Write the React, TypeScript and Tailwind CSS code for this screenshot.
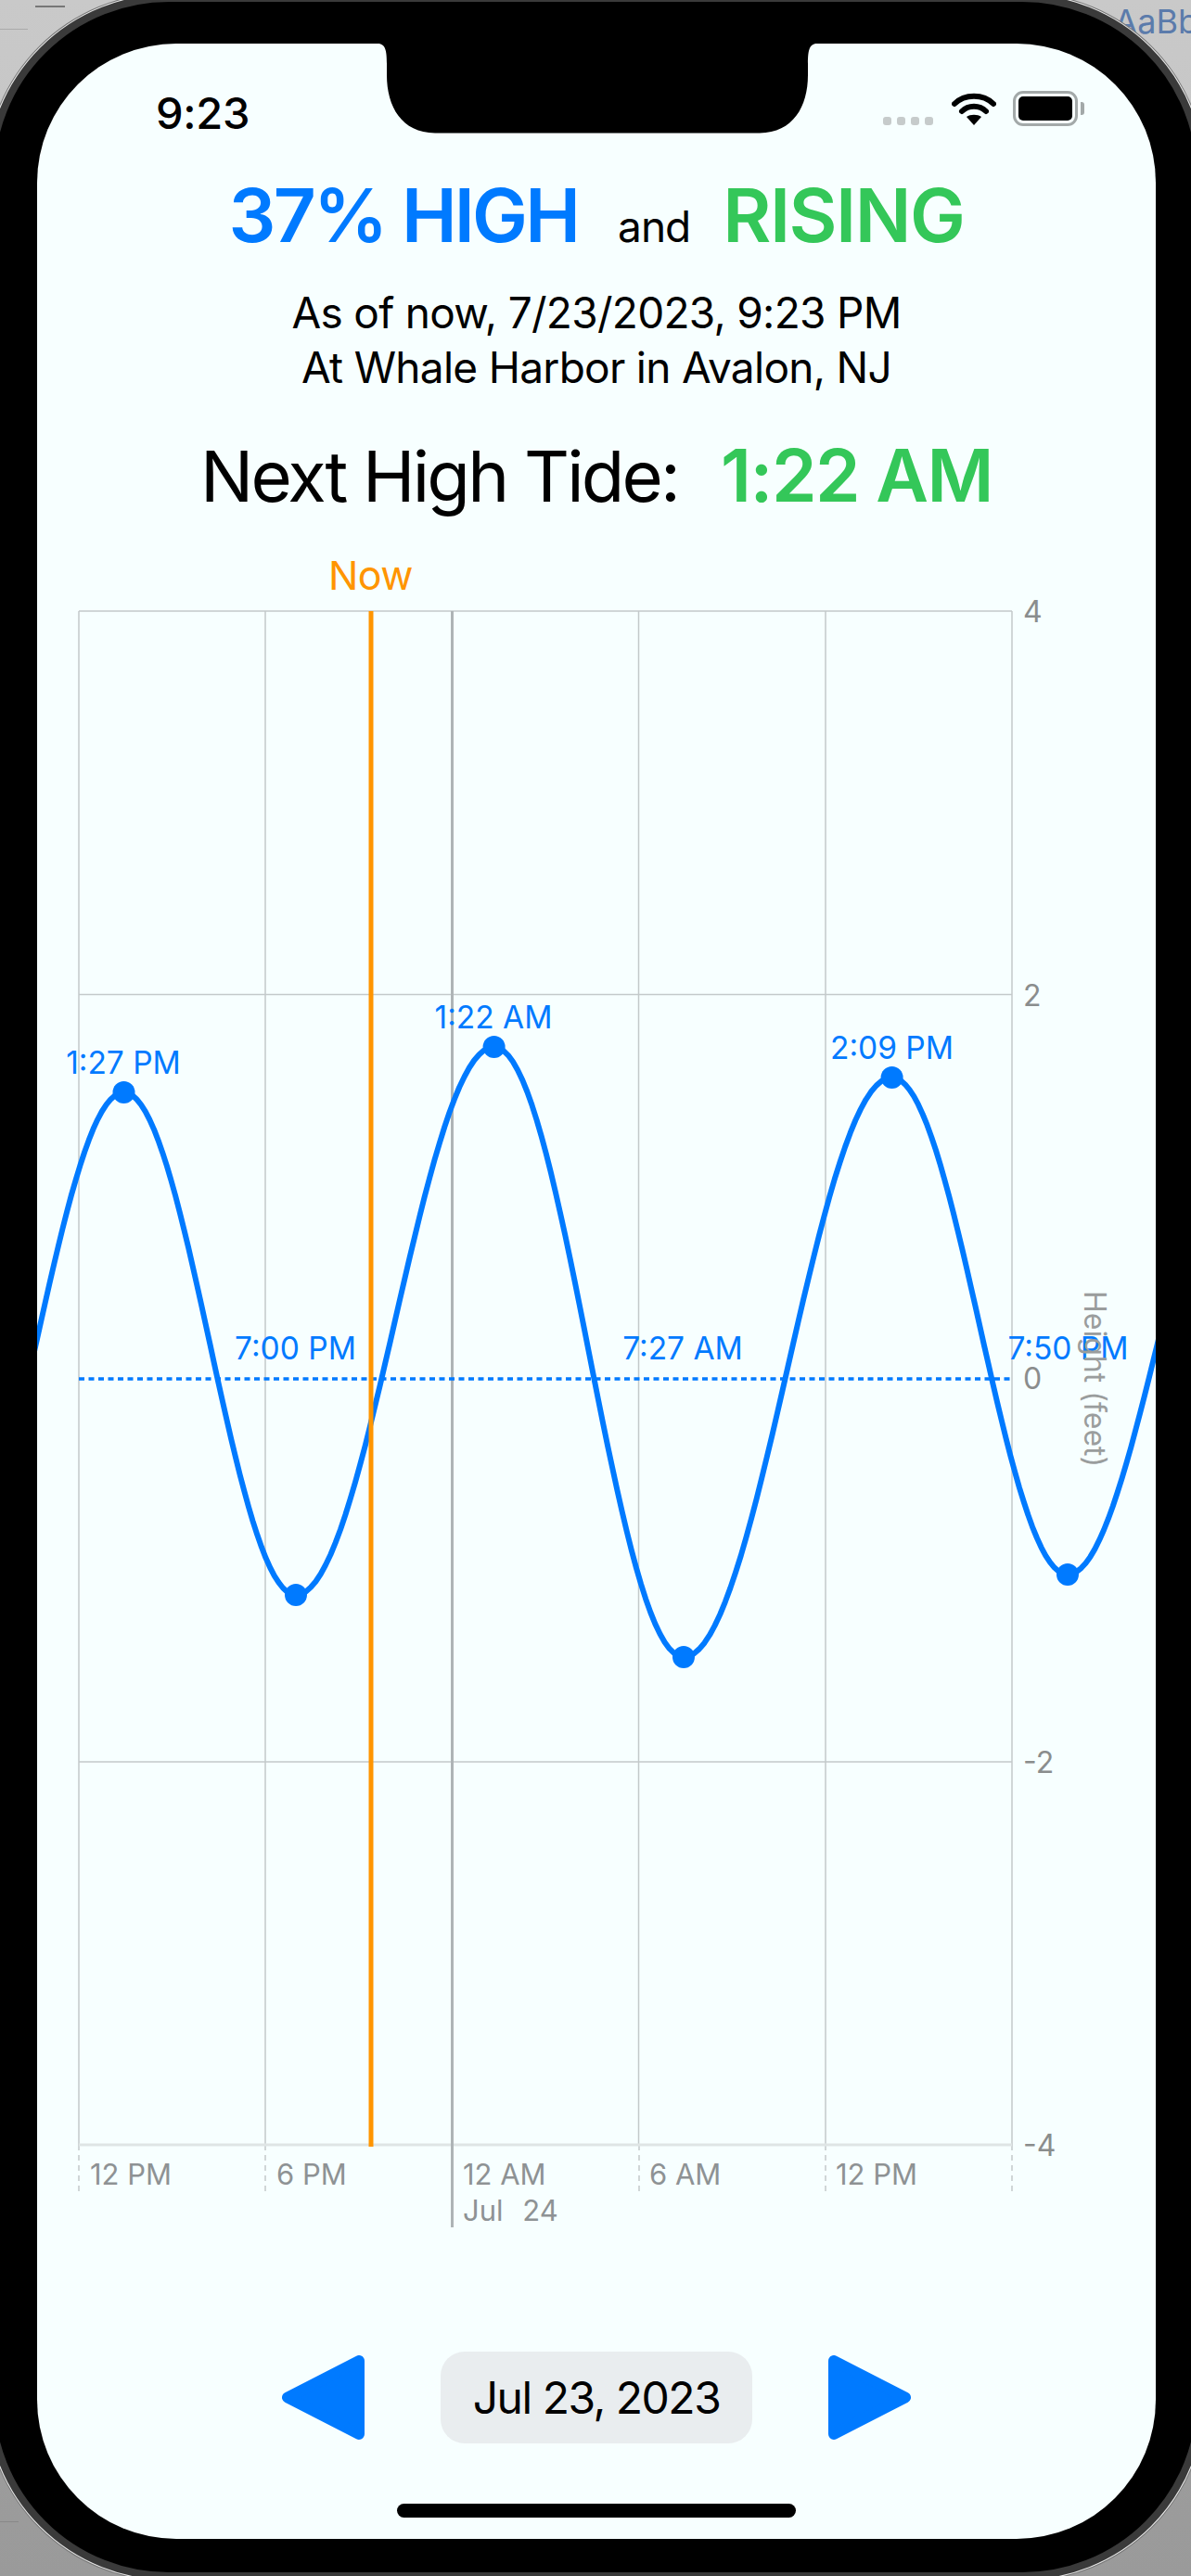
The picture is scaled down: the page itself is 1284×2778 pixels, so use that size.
import React from "react";

const sans = "font-['Inter','Liberation_Sans',sans-serif]";

const extremes: [number, number][] = [
  [-55, 1716],
  [133.5, 1178],
  [319, 1720],
  [532.6, 1129],
  [737, 1787],
  [961.6, 1162],
  [1151, 1698],
  [1346, 1195],
];

function tidePath() {
  let d = "";
  for (let i = 0; i < extremes.length - 1; i++) {
    const [x0, y0] = extremes[i];
    const [x1, y1] = extremes[i + 1];
    for (let s = 0; s <= 40; s++) {
      const t = s / 40;
      const x = x0 + (x1 - x0) * t;
      const y = y0 + ((y1 - y0) * (1 - Math.cos(Math.PI * t))) / 2;
      d += `${d ? "L" : "M"}${x.toFixed(1)} ${y.toFixed(1)}`;
    }
  }
  return d;
}

const xGrid = [85, 286, 688.5, 890, 1091];
const yGrid = [659, 1072.5, 1900, 2313];

const eventLabels: [string, number, number][] = [
  ["1:27 PM", 133, 1158],
  ["1:22 AM", 532, 1109],
  ["2:09 PM", 961.5, 1142],
  ["7:00 PM", 318.5, 1466],
  ["7:27 AM", 736, 1466],
  ["7:50 PM", 1151.5, 1466],
];

const xLabels: [string, number][] = [
  ["12 PM", 97],
  ["6 PM", 298],
  ["12 AM", 499],
  ["6 AM", 700],
  ["12 PM", 901],
];

const yLabels: [string, number][] = [
  ["4", 659],
  ["2", 1072.5],
  ["0", 1486],
  ["-2", 1900],
  ["-4", 2313],
];

function Chart() {
  return (
    <svg width="1206" height="1830" viewBox="40 590 1206 1830" className="block" style={{ fontFamily: "Inter, 'Liberation Sans', sans-serif" }}>
      {xGrid.map((x) => (
        <line key={x} x1={x} x2={x} y1={659} y2={2313} stroke="#c3c9ca" strokeWidth="1.5" />
      ))}
      {[85, 286, 689, 890, 1091].map((x) => (
        <line key={x} x1={x} x2={x} y1={2313} y2={2364} stroke="#c3c9ca" strokeWidth="1.5" strokeDasharray="6 5" />
      ))}
      {yGrid.map((y, i) => (
        <line key={y} x1={85} x2={1091} y1={y} y2={y} stroke={i === 3 ? "#dfe5e5" : "#c3c9ca"} strokeWidth={i === 3 ? 3 : 1.5} />
      ))}
      <line x1={487.5} x2={487.5} y1={659} y2={2402} stroke="#aeb4b6" strokeWidth="3" />
      <line x1={85} x2={1091} y1={1487} y2={1487} stroke="#007aff" strokeWidth="3.5" strokeDasharray="6 4.5" />
      <path d={tidePath()} fill="none" stroke="#007aff" strokeWidth="6" strokeLinejoin="round" />
      <line x1={400} x2={400} y1={659} y2={2315} stroke="#ff9500" strokeWidth="5" />
      {[
        [133.5, 1178],
        [319, 1720],
        [532.6, 1129],
        [737, 1787],
        [961.6, 1162],
        [1151, 1698],
      ].map(([x, y]) => (
        <circle key={x} cx={x} cy={y} r="12" fill="#007aff" />
      ))}
      <text x={399.5} y={636} textAnchor="middle" fontSize="43" fill="#ff9500" letterSpacing="-0.5">Now</text>
      {eventLabels.map(([t, x, y]) => (
        <text key={t} x={x} y={y} textAnchor="middle" fontSize="33.5" fill="#007aff" letterSpacing="0">{t}</text>
      ))}
      {xLabels.map(([t, x], i) => (
        <text key={i} x={x} y={2356} fontSize="31" fill="#8e9294" letterSpacing="0">{t}</text>
      ))}
      <text x={499} y={2395} fontSize="31" fill="#8e9294" wordSpacing="12">Jul 24</text>
      {yLabels.map(([t, y]) => (
        <text key={t} x={1103} y={y + 12} fontSize="32" fill="#8a8d8d">{t}</text>
      ))}
      <text x={1169} y={1392} fontSize="32" fill="#9a9d9d" transform="rotate(90 1169 1392)">Height (feet)</text>
    </svg>
  );
}

function Arrow({ flip }: { flip?: boolean }) {
  return (
    <svg width="90" height="91" viewBox="0 0 90 91" className={flip ? "block -scale-x-100" : "block"}>
      <polygon points="7,45.5 84,6 84,85" fill="#007aff" stroke="#007aff" strokeWidth="12" strokeLinejoin="round" />
    </svg>
  );
}

function StatusIcons() {
  return (
    <div className="flex items-start">
      <div className="mt-[28px] flex gap-[6px]">
        {[0, 1, 2, 3].map((i) => (
          <div key={i} className="h-[9px] w-[9px] rounded-[3px] bg-[#c6cbcb]" />
        ))}
      </div>
      <svg width="48" height="38" viewBox="0 0 48 38" className="ml-[20px] block">
        <path d="M3 14 C14 3 34 3 45 14" fill="none" stroke="#000" strokeWidth="6" strokeLinecap="round" />
        <path d="M11 22 C18 15 30 15 37 22" fill="none" stroke="#000" strokeWidth="6" strokeLinecap="round" />
        <path d="M16 28 C20 25 28 25 32 28 L24 37 Z" fill="#000" />
      </svg>
      <div className="ml-[18px] flex items-center">
        <div className="h-[38px] w-[70px] rounded-[11px] border-[3px] border-[#a3a9a9] p-[3px]">
          <div className="h-full w-full rounded-[5px] bg-black" />
        </div>
        <div className="ml-[3px] h-[14px] w-[4px] rounded-r-[3px] bg-[#a3a9a9]" />
      </div>
    </div>
  );
}

export default function App() {
  return (
    <div className={`relative h-[2778px] w-[1284px] overflow-hidden bg-gradient-to-b from-[#c9c9c9] to-[#9a9a9a] ${sans}`}>
      <div className="absolute right-[-8px] top-[-4px] text-[36px] text-[#5b7bab]">AaBb</div>
      <div className="absolute left-[38px] top-[6px] h-[2px] w-[32px] bg-[#777]" />
      <div className="absolute left-0 top-[31px] h-px w-[30px] bg-[#aaa]" />
      <div className="absolute bottom-[58px] left-0 h-px w-[20px] bg-[#888]" />

      <div className="relative -ml-[14px] -mt-[6px] h-[2788px] w-[1312px] rounded-[196px] border-[8px] border-[#3a3a3a] bg-black pl-[46px] pt-[45px] shadow-[0_0_0_1px_#e8e8e8,0_0_0_2px_#777]">
        <div className="relative flex h-[2691px] w-[1206px] flex-col items-center overflow-hidden rounded-[150px] bg-[#f7ffff]">
          <svg width="474" height="97" viewBox="0 0 474 97" className="absolute left-[367px] top-0 block">
            <path d="M0 0 H474 C466 0 464 6 464 22 V34 C464 68 448 96 412 96.5 H62 C26 96 10 68 10 34 V22 C10 6 8 0 0 0 Z" fill="#000" />
          </svg>

          <div className="flex h-[97px] w-full items-start justify-between pl-[128px] pr-[77px] pt-[51px]">
            <div className="text-[47px] font-medium leading-[47px] tracking-[-0.3px] text-black">9:23</div>
            <StatusIcons />
          </div>

          <div className="mt-[43px] flex h-[90px] items-baseline justify-center leading-[90px]">
            <span className="text-[80px] font-semibold tracking-[-2.8px] text-[#007aff]">37% HIGH</span>
            <span className="ml-[43px] text-[46px] tracking-[-1px] text-black">and</span>
            <span className="ml-[35px] text-[80px] font-semibold tracking-[-1.5px] text-[#34c759]">RISING</span>
          </div>

          <div className="mt-[31px] text-center text-[46px] leading-[59px] tracking-[-0.7px] text-black">
            <div>As of now, 7/23/2023, 9:23 PM</div>
            <div>At Whale Harbor in Avalon, NJ</div>
          </div>

          <div className="mt-[42px] flex h-[90px] items-baseline justify-center leading-[90px]">
            <span className="text-[76px] tracking-[-2.8px] text-black">Next High Tide:</span>
            <span className="ml-[46px] text-[78px] font-semibold tracking-[-1.5px] text-[#34c759]">1:22 AM</span>
          </div>

          <div className="mt-[32px]">
            <Chart />
          </div>

          <div className="mt-[116px] flex items-center">
            <Arrow />
            <div className="ml-[82px] flex h-[99px] w-[336px] items-center justify-center rounded-[26px] bg-[#e9edef] text-[48px] tracking-[-1.5px] text-black">
              Jul 23, 2023
            </div>
            <div className="ml-[82px]">
              <Arrow flip />
            </div>
          </div>

          <div className="mt-[65px] h-[15px] w-[430px] rounded-full bg-black" />
        </div>
      </div>
    </div>
  );
}
